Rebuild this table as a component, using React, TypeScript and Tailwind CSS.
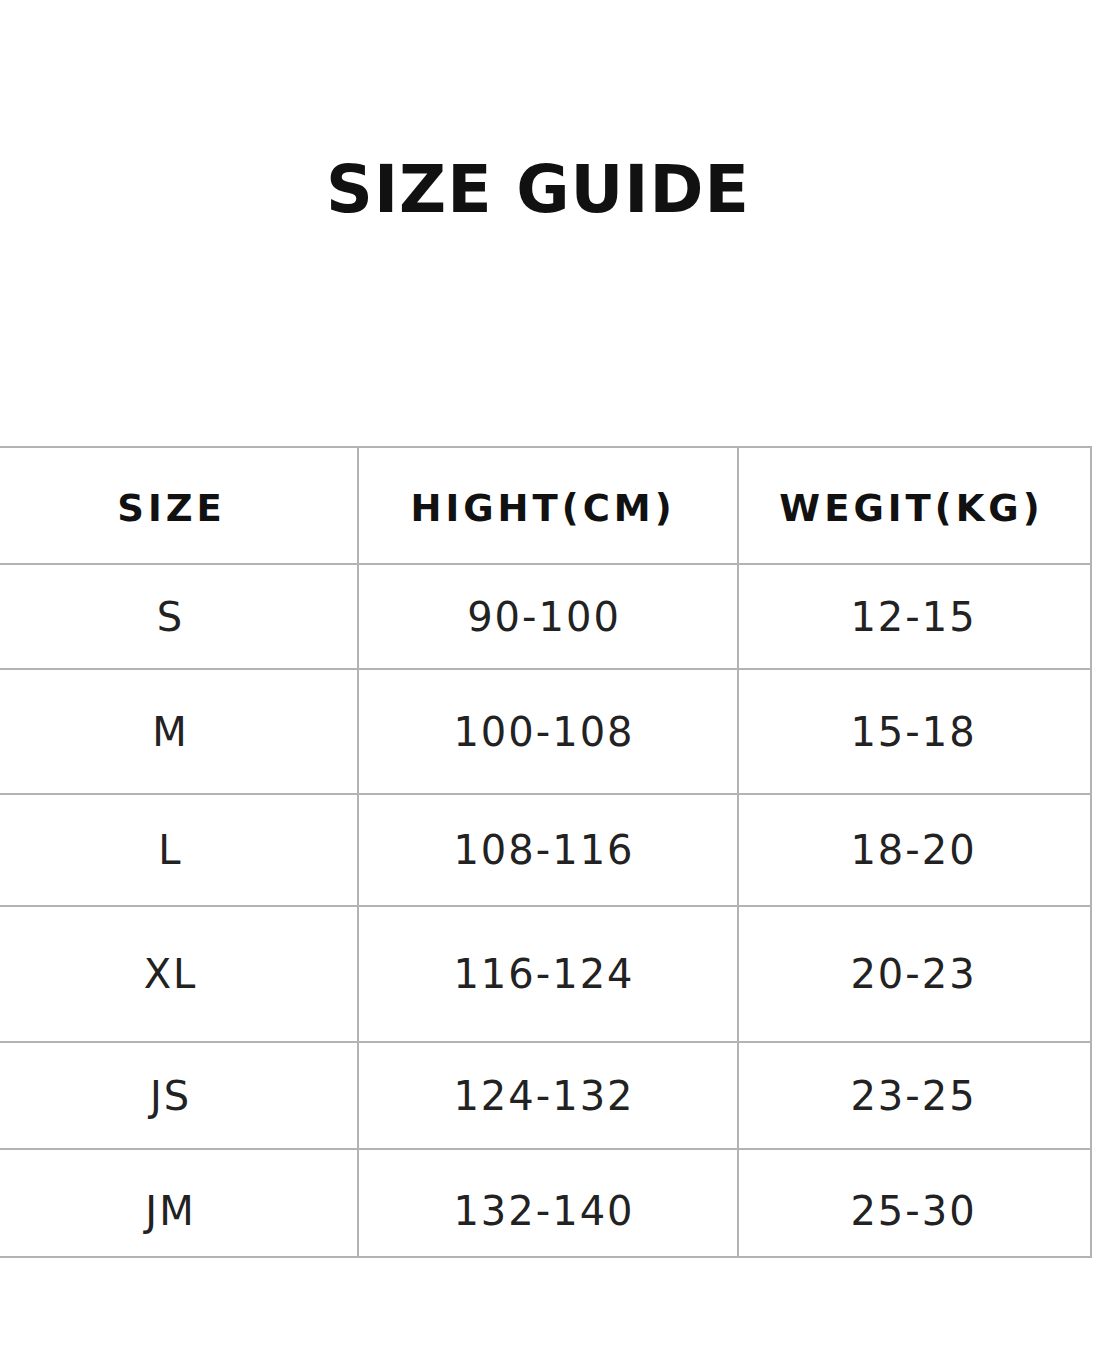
import React from "react";

const rows: { h: string; cells: string[]; pt: string }[] = [
  { h: "h-[105px]", cells: ["S", "90-100", "12-15"], pt: "pt-0" },
  { h: "h-[125px]", cells: ["M", "100-108", "15-18"], pt: "pt-0" },
  { h: "h-[112px]", cells: ["L", "108-116", "18-20"], pt: "pt-0" },
  { h: "h-[136px]", cells: ["XL", "116-124", "20-23"], pt: "pt-0" },
  { h: "h-[107px]", cells: ["JS", "124-132", "23-25"], pt: "pt-0" },
  { h: "h-[108px]", cells: ["JM", "132-140", "25-30"], pt: "pt-[16px]" },
];

const cols = ["w-[377px]", "w-[380px]", "w-[353px]"];
const headPad = ["pl-[4px]", "pr-[10px]", "pr-[6px]"];
const dataPad = ["pl-[2px]", "pr-[8px]", "pr-[2px]"];

export default function App() {
  return (
    <div
      className="w-[1094px] h-[1367px] bg-white overflow-hidden"
      style={{ fontFamily: '"DejaVu Sans", sans-serif' }}
    >
      <div className="h-[446px] flex justify-center pt-[150px]">
        <h1 className="text-[65px] leading-[80px] font-bold text-[#111] tracking-[1px] pr-[18px]">
          SIZE GUIDE
        </h1>
      </div>
      <div className="ml-[-18px] w-[1110px] border-t-2 border-[#b3b3b3]">
        <div className="flex h-[117px]">
          {["SIZE", "HIGHT(CM)", "WEGIT(KG)"].map((t, i) => (
            <div
              key={t}
              className={`${cols[i]} ${headPad[i]} border-r-2 border-b-2 border-[#b3b3b3] flex items-center justify-center`}
            >
              <span className="text-[37px] font-bold text-[#111] tracking-[4px] pt-[6px]">
                {t}
              </span>
            </div>
          ))}
        </div>
        {rows.map((r) => (
          <div key={r.cells[0]} className={`flex ${r.h}`}>
            {r.cells.map((c, i) => (
              <div
                key={i}
                className={`${cols[i]} ${dataPad[i]} border-r-2 border-b-2 border-[#b3b3b3] flex items-center justify-center ${r.pt}`}
              >
                <span className="text-[40px] text-[#222] tracking-[2px]">{c}</span>
              </div>
            ))}
          </div>
        ))}
      </div>
    </div>
  );
}
